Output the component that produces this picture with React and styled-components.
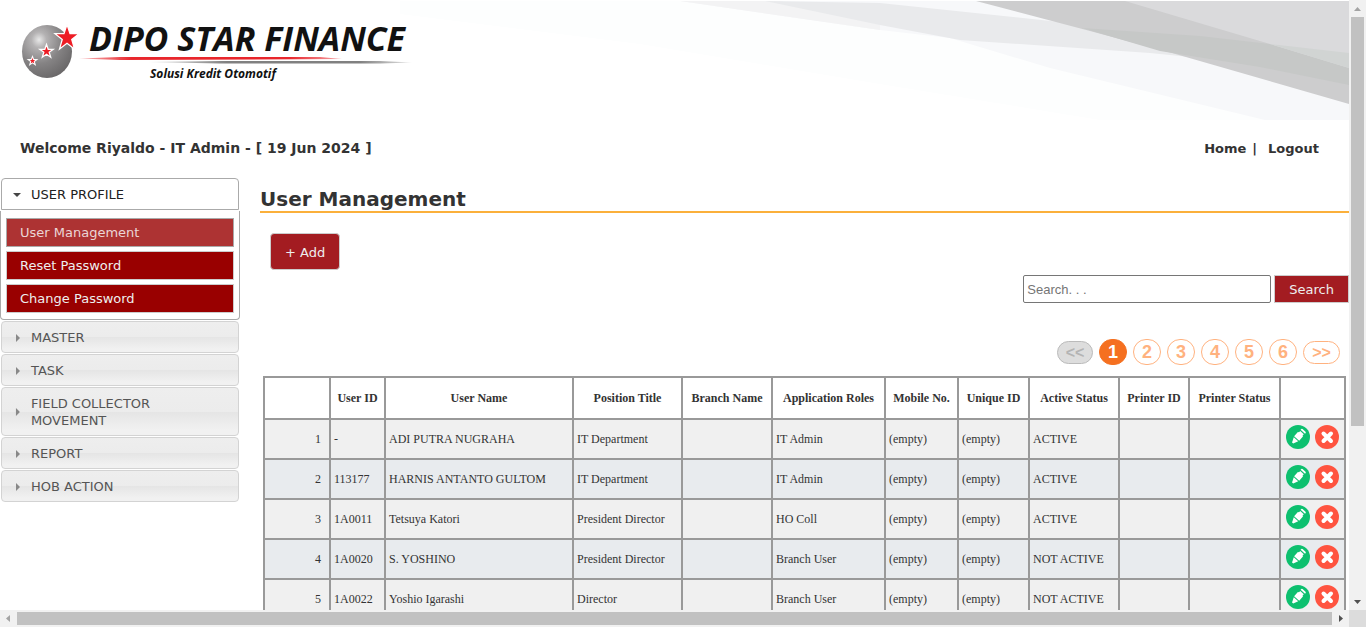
import React from "react";
import styled, { createGlobalStyle, css } from "styled-components";

const GlobalStyle = createGlobalStyle`
  *, *::before, *::after { box-sizing: border-box; }
  html, body { margin: 0; padding: 0; background: #fff; }
  body {
    font-family: Verdana, "DejaVu Sans", sans-serif;
    font-size: 13px;
    color: #333;
  }
`;

const Frame = styled.div`
  display: grid;
  grid-template-columns: minmax(0, 1fr) 17px;
  grid-template-rows: minmax(0, 1fr) 17px;
  height: 100vh;
`;

const Viewport = styled.div`
  overflow: hidden;
`;

const Header = styled.header`
  position: relative;
  height: 120px;
  margin-bottom: 18px;
  overflow: hidden;
`;

const Swoosh = styled.svg`
  position: absolute;
  top: 0;
  right: 0;
`;

const LogoLink = styled.a`
  position: relative;
  display: inline-block;
`;

const Welcome = styled.div`
  display: flex;
  justify-content: space-between;
  padding: 0 30px 0 20px;
  margin-bottom: 19px;
  font-weight: bold;
  line-height: 21px;
`;

const Greeting = styled.span`
  font-size: 14px;
`;

const TopLinks = styled.nav`
  display: flex;
  gap: 6px;
`;

const TopLink = styled.a`
  color: #333;
  text-decoration: none;
  margin-left: ${(p) => (p.$spaced ? "5px" : "0")};
`;

const Columns = styled.div`
  display: grid;
  grid-template-columns: 240px minmax(0, 1fr);
  column-gap: 20px;
`;

const Sidebar = styled.nav`
  display: flex;
  flex-direction: column;
  gap: 1px;
`;

const SectionButton = styled.button`
  display: flex;
  align-items: center;
  gap: 10px;
  margin: 0 1px;
  padding: 7px 11px 6px;
  border: 1px solid #d3d3d3;
  border-radius: 4px;
  background: linear-gradient(#eee 0, #ececec 50%, #e5e5e5 51%, #f1f1f1 90%);
  color: #555;
  font: inherit;
  line-height: 17px;
  text-align: left;
  ${(p) =>
    p.$open &&
    css`
      border-color: #aaa;
      border-radius: 4px 4px 0 0;
      background: #fff;
      color: #212121;
    `}
`;

const SubMenu = styled.div`
  display: flex;
  flex-direction: column;
  gap: 4px;
  padding: 7px 5px 6px;
  border: 1px solid #aaa;
  border-top: 0;
  border-radius: 0 0 4px 4px;
`;

const SubLink = styled.a`
  padding: 5px 13px;
  border: 1px solid ${(p) => (p.$active ? "#aaa" : "#ccc")};
  background: ${(p) => (p.$active ? "#ad3333" : "#990000")};
  color: ${(p) => (p.$active ? "#ebd6d6" : "#eee")};
  line-height: 17px;
  text-decoration: none;
`;

const Main = styled.main`
  display: flex;
  flex-direction: column;
`;

const Title = styled.h1`
  margin: 9px 0 0;
  border-bottom: 2px solid #fbb03b;
  font-size: 20px;
  line-height: 24px;
`;

const RedButton = styled.button`
  border: 1px solid #ccc;
  background: #a31c21;
  color: #eee;
  font: inherit;
  line-height: 17px;
`;

const AddButton = styled(RedButton)`
  align-self: flex-start;
  margin: 20px 0 5px 10px;
  padding: 10px 14px 8px;
  border-radius: 4px;
`;

const SearchForm = styled.form`
  display: flex;
  justify-content: flex-end;
  gap: 3px;
`;

const SearchInput = styled.input`
  width: 248px;
  height: 28px;
  padding: 0 3px;
  border: 1px solid #767676;
  border-radius: 2px;
  font: 13px "Liberation Sans", Arial, sans-serif;
  &::placeholder { color: #757575; }
`;

const SearchButton = styled(RedButton)`
  padding: 0 14px;
`;

const Pager = styled.nav`
  display: flex;
  justify-content: flex-end;
  align-items: center;
  gap: 6px;
  margin: 36px 9px 11px 0;
`;

const PageButton = styled.button`
  width: 28px;
  height: 26px;
  padding: 0;
  border: 1px solid #ffb27f;
  border-radius: 13px;
  background: #fff;
  color: #ffb27f;
  font: bold 18px/24px "Liberation Sans", Arial, sans-serif;
  ${(p) =>
    p.$current &&
    css`
      border-color: #f57020;
      background: #f57020;
      color: #fff;
    `}
`;

const StepButton = styled(PageButton)`
  width: 37px;
  height: 23px;
  font-size: 16px;
  line-height: 21px;
  &:disabled {
    width: 36px;
    border-color: #bbb;
    background: #ddd;
    color: #b4b4b4;
  }
`;

const Table = styled.table`
  width: calc(100% - 6px);
  margin-left: 3px;
  border-collapse: collapse;
  table-layout: fixed;
  border: 2px solid #888;
  border-right-color: #444;
  font: 12px/16px "Liberation Serif", "Times New Roman", serif;
`;

const Col = styled.col`
  width: ${(p) => (p.$w ? `${p.$w}px` : "auto")};
`;

const Th = styled.th`
  height: 42px;
  padding: 0;
  border: 2px solid #999;
  white-space: nowrap;
`;

const Row = styled.tr`
  height: 40px;
  background: #f0f0f0;
  &:nth-child(even) { background: #e8ebee; }
`;

const Td = styled.td`
  padding: 0 3px;
  border: 2px solid #999;
  text-align: left;
  white-space: nowrap;
  ${(p) => p.$number && "text-align: right; padding-right: 8px;"}
`;

const Actions = styled.div`
  display: flex;
  gap: 5px;
  padding: 0 2px 5px;
`;

const IconButton = styled.button`
  display: flex;
  padding: 0;
  border: 0;
  background: none;
`;

const Track = styled.div`
  display: flex;
  flex-direction: ${(p) => (p.$vertical ? "column" : "row")};
  background: #f1f1f1;
`;

const Groove = styled.div`
  display: flex;
  flex: 1;
  flex-direction: ${(p) => (p.$vertical ? "column" : "row")};
  padding: ${(p) => (p.$vertical ? "0 2px" : "2px 0")};
`;

const Thumb = styled.div`
  flex: 0 0 ${(p) => p.$size};
  background: #c1c1c1;
`;

const Corner = styled.div`
  background: #dcdcdc;
`;

const ARROWS = {
  up: "M5 11h7l-3.5-4z",
  down: "M5 7h7l-3.5 4z",
  left: "M10 5v7l-4-3.5z",
  right: "M7 5v7l4-3.5z",
};

function Arrow({ dir, color = "#505050" }) {
  return (
    <svg width="17" height="17" viewBox="0 0 17 17" aria-hidden="true">
      <path d={ARROWS[dir]} fill={color} />
    </svg>
  );
}

function Caret({ open }) {
  return (
    <svg width="8" height="8" viewBox="0 0 8 8" aria-hidden="true">
      <path d={open ? "M0 2h8L4 6z" : "M3 0v8l4-4z"} fill={open ? "#454545" : "#888"} />
    </svg>
  );
}

function HeaderSwoosh() {
  return (
    <Swoosh width="949" height="120" viewBox="400 0 949 120" aria-hidden="true">
      <path d="M400 1H1349V120H1100L880 84 640 44 400 14z" fill="#fdfefe" />
      <path d="M680 1H1349V120H1265L1050 68 950 38 880 30z" fill="#f7f8fa" />
      <path d="M680 1H780L880 24V30z" fill="#f3f3f4" />
      <path d="M765 1L880 3 1060 22 1200 38V58L1150 53 960 40 880 25z" fill="#e9eaec" />
      <path d="M976 1H1349V104L1172 53 1090 31z" fill="#cdcdce" />
      <path d="M1082 28L1200 36 1349 53V85L1260 67 1160 51z" fill="#c6c8c7" />
      <path d="M1125 1H1349V68L1270 44z" fill="#dadadc" />
      <path d="M1270 44L1349 53V68z" fill="#d1d4d3" />
    </Swoosh>
  );
}

const STAR = "M0-10L2.4-3.2H9.6L3.8 1.1 6 8.1 0 3.9-6 8.1-3.8 1.1-9.6-3.2H-2.4z";

function Logo() {
  return (
    <svg width="420" height="100" viewBox="0 0 420 100" role="img" aria-label="Dipo Star Finance">
      <defs>
        <radialGradient id="ball" cx="34%" cy="28%" r="75%">
          <stop offset="0" stopColor="#e8e8e8" />
          <stop offset="0.2" stopColor="#b4b2b3" />
          <stop offset="0.6" stopColor="#858384" />
          <stop offset="1" stopColor="#6b696a" />
        </radialGradient>
        <linearGradient id="redLine">
          <stop offset="0" stopColor="#e8262c" stopOpacity="0.3" />
          <stop offset="0.2" stopColor="#e8262c" />
          <stop offset="0.8" stopColor="#e8262c" />
          <stop offset="1" stopColor="#e8262c" stopOpacity="0.4" />
        </linearGradient>
        <linearGradient id="greyLine">
          <stop offset="0" stopColor="#808080" stopOpacity="0.2" />
          <stop offset="0.3" stopColor="#808080" />
          <stop offset="0.8" stopColor="#808080" />
          <stop offset="1" stopColor="#808080" stopOpacity="0.2" />
        </linearGradient>
      </defs>
      <ellipse cx="47" cy="51.500" rx="25" ry="26.500" fill="url(#ball)" />
      <g fill="#ed1c24" stroke="#fff" strokeLinejoin="miter">
        <path d={STAR} transform="translate(67 38) scale(1.25 1.35)" strokeWidth="1" />
        <path d={STAR} transform="translate(46.500 51.500) scale(.7)" strokeWidth="1.800" />
        <path d={STAR} transform="translate(32.500 61) scale(.46)" strokeWidth="2.200" />
      </g>
      <g fill="#111" fontFamily="'Open Sans', 'Noto Sans', sans-serif" fontStyle="italic">
        <text x="89" y="51" fontSize="34" fontWeight="700">DIPO STAR FINANCE</text>
        <text x="150" y="78" fontSize="12" fontWeight="700">Solusi Kredit Otomotif</text>
      </g>
      <path d="M79 58.500L120 57H320L342 59 120 60z" fill="url(#redLine)" />
      <path d="M148 62L220 61H380L412 62.500 380 63.500H220z" fill="url(#greyLine)" />
    </svg>
  );
}

function EditIcon() {
  return (
    <svg width="24" height="24" viewBox="0 0 24 24" aria-hidden="true">
      <circle cx="12" cy="12" r="12" fill="#0dc06f" />
      <g transform="rotate(42 12 12)" fill="#fff">
        <path d="M9 4.200q0-1.200 1-1.200h4q1 0 1 1.200v.6H9z" />
        <path d="M9.600 6h4.800v1.800l1 .6v5.600H8.600V8.400l1-.6z" />
        <path d="M9 15h6l-2.200 5h-1.600z" />
      </g>
    </svg>
  );
}

function DeleteIcon() {
  return (
    <svg width="24" height="24" viewBox="0 0 24 24" aria-hidden="true">
      <circle cx="12" cy="12" r="12" fill="#ff5440" />
      <path d="M8.500 8.500l7.500 7.500M16 8.500l-7.500 7.500" stroke="#fff" strokeWidth="4" strokeLinecap="round" />
    </svg>
  );
}

const SUB_ITEMS = ["User Management", "Reset Password", "Change Password"];
const SECTIONS = ["MASTER", "TASK", "FIELD COLLECTOR MOVEMENT", "REPORT", "HOB ACTION"];

const COLUMNS = [
  ["", 66],
  ["User ID", 55],
  ["User Name", 0],
  ["Position Title", 109],
  ["Branch Name", 90],
  ["Application Roles", 113],
  ["Mobile No.", 73],
  ["Unique ID", 71],
  ["Active Status", 90],
  ["Printer ID", 70],
  ["Printer Status", 91],
  ["", 65],
];

const USERS = [
  ["-", "ADI PUTRA NUGRAHA", "IT Department", "", "IT Admin", "(empty)", "(empty)", "ACTIVE", "", ""],
  ["113177", "HARNIS ANTANTO GULTOM", "IT Department", "", "IT Admin", "(empty)", "(empty)", "ACTIVE", "", ""],
  ["1A0011", "Tetsuya Katori", "President Director", "", "HO Coll", "(empty)", "(empty)", "ACTIVE", "", ""],
  ["1A0020", "S. YOSHINO", "President Director", "", "Branch User", "(empty)", "(empty)", "NOT ACTIVE", "", ""],
  ["1A0022", "Yoshio Igarashi", "Director", "", "Branch User", "(empty)", "(empty)", "NOT ACTIVE", "", ""],
];

export default function App() {
  return (
    <>
      <GlobalStyle />
      <Frame>
        <Viewport>
          <Header>
            <HeaderSwoosh />
            <LogoLink href="#home"><Logo /></LogoLink>
          </Header>
          <Welcome>
            <Greeting>Welcome Riyaldo - IT Admin - [ 19 Jun 2024 ]</Greeting>
            <TopLinks>
              <TopLink href="#home">Home</TopLink>
              <span>|</span>
              <TopLink href="#logout" $spaced>Logout</TopLink>
            </TopLinks>
          </Welcome>
          <Columns>
            <Sidebar>
              <SectionButton $open aria-expanded="true"><Caret open />USER PROFILE</SectionButton>
              <SubMenu>
                {SUB_ITEMS.map((item, i) => (
                  <SubLink key={item} href="#menu" $active={i === 0}>{item}</SubLink>
                ))}
              </SubMenu>
              {SECTIONS.map((name) => (
                <SectionButton key={name} aria-expanded="false"><Caret />{name}</SectionButton>
              ))}
            </Sidebar>
            <Main>
              <Title>User Management</Title>
              <AddButton type="button">+ Add</AddButton>
              <SearchForm>
                <SearchInput type="text" aria-label="Search" placeholder="Search. . ." />
                <SearchButton type="button">Search</SearchButton>
              </SearchForm>
              <Pager aria-label="Pages">
                <StepButton disabled>&lt;&lt;</StepButton>
                {[1, 2, 3, 4, 5, 6].map((n) => (
                  <PageButton key={n} $current={n === 1}>{n}</PageButton>
                ))}
                <StepButton>&gt;&gt;</StepButton>
              </Pager>
              <Table>
                <colgroup>
                  {COLUMNS.map(([, w], i) => <Col key={i} $w={w} />)}
                </colgroup>
                <thead>
                  <tr>{COLUMNS.map(([label], i) => <Th key={i}>{label}</Th>)}</tr>
                </thead>
                <tbody>
                  {USERS.map((user, r) => (
                    <Row key={user[0]}>
                      <Td $number>{r + 1}</Td>
                      {user.map((value, c) => <Td key={c}>{value}</Td>)}
                      <Td>
                        <Actions>
                          <IconButton aria-label="Edit"><EditIcon /></IconButton>
                          <IconButton aria-label="Delete"><DeleteIcon /></IconButton>
                        </Actions>
                      </Td>
                    </Row>
                  ))}
                </tbody>
              </Table>
            </Main>
          </Columns>
        </Viewport>
        <Track $vertical>
          <Arrow dir="up" color="#a3a3a3" />
          <Groove $vertical><Thumb $size="71%" /></Groove>
          <Arrow dir="down" />
        </Track>
        <Track>
          <Arrow dir="left" color="#a3a3a3" />
          <Groove><Thumb $size="100%" /></Groove>
          <Arrow dir="right" />
        </Track>
        <Corner />
      </Frame>
    </>
  );
}
